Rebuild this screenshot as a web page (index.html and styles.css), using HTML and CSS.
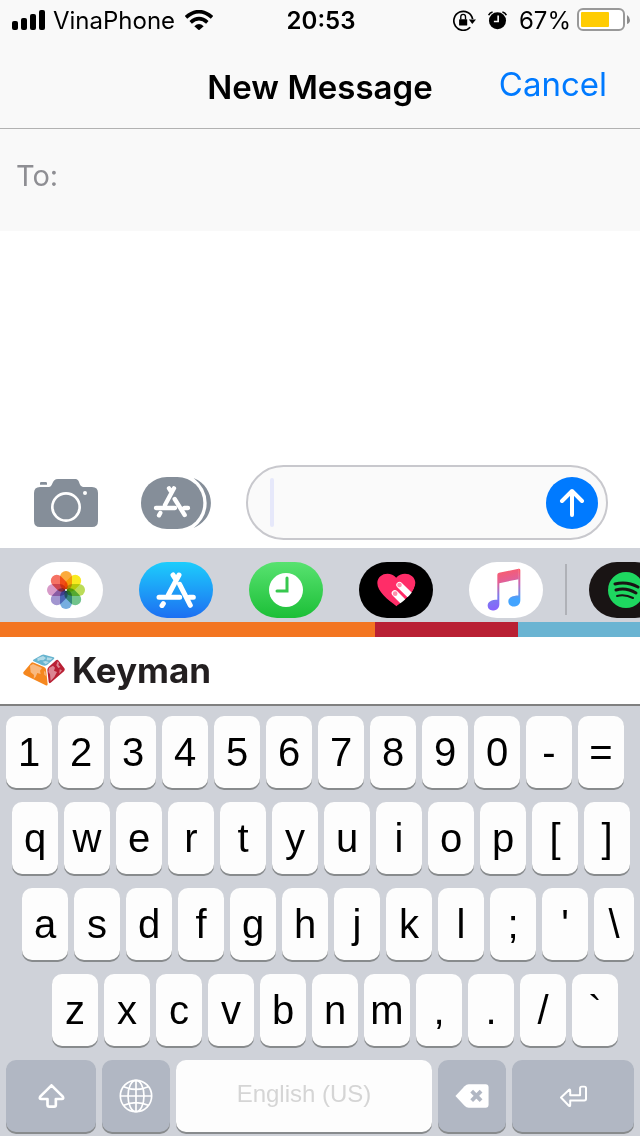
FILE: index.html
```html
<!DOCTYPE html>
<html lang="en">
<head>
<meta charset="utf-8">
<meta name="viewport" content="width=device-width, initial-scale=1">
<title>New Message</title>
<link rel="stylesheet" href="styles.css">
</head>
<body>
<header class="top">
  <div class="status">
    <div class="status-left">
      <svg class="signal" viewBox="0 0 34 20" width="34" height="20" aria-hidden="true"><rect x="0" y="11" width="6" height="9" rx="2"/><rect x="9" y="8" width="6" height="12" rx="2"/><rect x="18" y="4" width="6" height="16" rx="2"/><rect x="27" y="0" width="6" height="20" rx="2"/></svg>
      <span>VinaPhone</span>
      <svg class="wifi" viewBox="0 0 84 60" width="28" height="20" aria-hidden="true"><g fill="none" stroke="#000" stroke-width="11"><path d="M3 22Q42-12 81 22"/><path d="M17 37Q42 15 67 37"/></g><path d="M28 49Q42 35 56 49L42 61Z"/></svg>
    </div>
    <time class="clock">20:53</time>
    <div class="status-right">
      <svg class="lock" viewBox="0 0 68 62" width="23" height="21" aria-hidden="true"><path d="M51 51A28 28 0 1 1 58 27" fill="none" stroke="#000" stroke-width="5"/><path d="M47 28H68L57 41Z"/><rect x="18" y="27" width="24" height="19" rx="2"/><path d="M23 28V20a7 7 0 0 1 14 0V28" fill="none" stroke="#000" stroke-width="4"/></svg>
      <svg class="alarm" viewBox="0 0 58 56" width="19" height="19" aria-hidden="true"><circle cx="29" cy="29" r="26"/><path d="M2 12Q5 4 14 2M44 2Q53 4 56 12" fill="none" stroke="#000" stroke-width="5"/><path d="M31 13V31H18" fill="none" stroke="#f9f9f9" stroke-width="5"/></svg>
      <span>67%</span>
      <svg class="battery" viewBox="0 0 53 24" width="53" height="24" aria-hidden="true"><rect x="1" y="1" width="46" height="21" rx="5" fill="#fff" stroke="#999" stroke-width="2"/><rect x="4" y="4" width="28" height="15" rx="1" fill="#ffcc02"/><path d="M50 7Q53 9 53 12T50 16Z" fill="#8c8c8c"/></svg>
    </div>
  </div>
  <nav class="nav">
    <h1 class="title">New Message</h1>
    <button class="cancel" type="button">Cancel</button>
  </nav>
</header>
<div class="recipient">
  <label for="to">To:</label>
  <input id="to" class="to-input" type="text">
</div>
<main class="thread"></main>
<form class="compose">
  <button class="plain camera" type="button" aria-label="Camera">
    <svg viewBox="0 0 192 144" width="64" height="48"><path fill="#858e99" d="M18 24H44C58 24 52 0 72 0H122C142 0 130 24 152 24H174Q192 24 192 42V126Q192 144 174 144H18Q0 144 0 126V42Q0 24 18 24ZM18 17V12Q18 9 22 9H35Q39 9 39 12V17Z"/><circle cx="96" cy="84" r="41" fill="none" stroke="#fff" stroke-width="8"/><circle cx="153" cy="42" r="6" fill="#fff"/></svg>
  </button>
  <button class="plain store" type="button" aria-label="Apps">
    <svg viewBox="0 0 210 156" width="70" height="52"><rect width="187" height="156" rx="78" ry="78" fill="#858e99"/><path fill="#858e99" d="M158 3C227 32 227 124 158 153Q197 122 197 78T158 3Z"/><g fill="none" stroke="#fff" stroke-width="13" stroke-linecap="round"><path d="M99 34L72 84M84 34L91 45M101 66L131 114M45 93H102M130 93H141M58 108L54 115"/></g></svg>
  </button>
  <div class="message">
    <span class="caret"></span>
    <input class="message-input" type="text" aria-label="Message">
    <button class="plain send" type="submit" aria-label="Send">
      <svg viewBox="0 0 52 52" width="52" height="52"><circle cx="26" cy="26" r="26" fill="#007aff"/><path d="M26 38V14M16 24L26 14L36 24" fill="none" stroke="#fff" stroke-width="4" stroke-linecap="round" stroke-linejoin="round"/></svg>
    </button>
  </div>
</form>
<section class="apps" aria-label="Message apps">
  <button class="app white" type="button" aria-label="Photos">
    <svg viewBox="-20 -20 40 40" width="40" height="40"><g class="petals"><rect x="-6" y="-19" width="12" height="19" rx="6" fill="#fbaa3c"/><rect x="-6" y="-19" width="12" height="19" rx="6" fill="#f8ea20" transform="rotate(45)"/><rect x="-6" y="-19" width="12" height="19" rx="6" fill="#bbdc58" transform="rotate(90)"/><rect x="-6" y="-19" width="12" height="19" rx="6" fill="#72c48c" transform="rotate(135)"/><rect x="-6" y="-19" width="12" height="19" rx="6" fill="#76aee0" transform="rotate(180)"/><rect x="-6" y="-19" width="12" height="19" rx="6" fill="#a296d0" transform="rotate(225)"/><rect x="-6" y="-19" width="12" height="19" rx="6" fill="#d79ac8" transform="rotate(270)"/><rect x="-6" y="-19" width="12" height="19" rx="6" fill="#f57264" transform="rotate(315)"/></g><circle r="1" fill="#fff"/></svg>
  </button>
  <button class="app blue" type="button" aria-label="App Store">
    <svg viewBox="468 76 120 108" width="40" height="36"><g fill="none" stroke="#fff" stroke-width="15" stroke-linecap="round"><path d="M537 85L505 145M519 85L527 97M539 113L571 176M477 152H539M568 152H580M490 171L486 177"/></g></svg>
  </button>
  <button class="app green" type="button" aria-label="Recents">
    <svg viewBox="0 0 34 34" width="34" height="34"><circle cx="17" cy="17" r="17" fill="#fff"/><path d="M18 5V18H8" fill="none" stroke="#37c84e" stroke-width="3" stroke-linecap="round"/></svg>
  </button>
  <button class="app black" type="button" aria-label="Digital Touch">
    <svg viewBox="470 88 118 102" width="39" height="34"><path d="M529 188C502 168 471 144 471 118C471 88 511 80 528 102C545 80 586 88 586 118C586 145 555 170 529 188Z" fill="#ff2d68"/><path d="M538 124L572 157M524 149L551 176" stroke="#fff" stroke-width="19" stroke-linecap="round"/><path d="M586 118C586 145 555 170 529 188L540 198L596 170Z" fill="#000"/><circle cx="538" cy="124" r="7" fill="#ff8fac"/><circle cx="525" cy="150" r="7" fill="#ff8fac"/></svg>
  </button>
  <button class="app white" type="button" aria-label="Music">
    <svg viewBox="170 68 114 128" width="38" height="43"><defs><linearGradient id="note" x1="0.300" y1="0" x2="0.500" y2="1"><stop offset="0" stop-color="#ff5b62"/><stop offset=".32" stop-color="#e45f94"/><stop offset=".65" stop-color="#7a7cef"/><stop offset="1" stop-color="#8c5cff"/></linearGradient><linearGradient id="tail" x1="0" y1="0" x2="0" y2="1"><stop offset="0" stop-color="#ff5a63"/><stop offset=".4" stop-color="#c66ab9"/><stop offset=".8" stop-color="#43a4ff"/></linearGradient></defs><path fill="url(#note)" d="M201 88Q201 83 206 82L265 70V101L207 113V176C207 190 196 195 187 195C177 195 172 189 172 181C172 168 184 163 201 163Z"/><path fill="url(#tail)" d="M264 70Q270 69 270 74V164C270 178 259 183 250 183C240 183 234 176 234 168C234 156 247 150 264 150Z"/></svg>
  </button>
  <span class="divider"></span>
  <button class="app dark" type="button" aria-label="Spotify">
    <svg viewBox="0 0 36 36" width="36" height="36"><circle cx="18" cy="18" r="18" fill="#1ed760"/><g fill="none" stroke="#191414" stroke-linecap="round"><path d="M7 12Q19 9 30 15" stroke-width="3"/><path d="M8 18Q18 15 28 21" stroke-width="3"/><path d="M9 24Q17 22 25 26" stroke-width="2"/></g></svg>
  </button>
</section>
<section class="keyboard" aria-label="Keyboard">
  <div class="stripe"><i class="orange"></i><i class="red"></i><i class="sky"></i></div>
  <div class="brand">
    <svg viewBox="68 328 126 96" width="42" height="32" aria-hidden="true"><path fill="#f5871f" d="M93 354Q96 352 101 354L131 367Q136 369 137 374L142 418Q142 424 136 422L75 392Q67 389 69 383Z"/><path fill="#67b4cf" d="M99 345L124 331Q128 329 132 330L160 338Q165 340 160 344L140 361Q134 365 126 362L100 350Q96 348 99 345Z"/><path fill="#b92034" d="M167 347Q171 343 175 348L192 371Q195 375 191 380L151 414Q146 418 145 411L141 376Q141 371 145 367Z"/><path fill="#f9b980" d="M89 363L98 358L125 370L119 378L121 388L111 385L106 396L100 403L101 391L91 383ZM131 379L135 382L137 394L132 390Z"/><path fill="#b2dae7" d="M111 341L128 334L137 340L129 347L121 346L112 350ZM140 338L157 341L151 347L139 347ZM127 351L136 349L146 352L136 359Z"/><path fill="#dc8592" d="M146 370L158 363L164 369L161 378L170 382L162 397L151 409L149 389L144 382ZM172 350L176 354L174 361L180 367L174 370L168 362ZM178 374L185 377L177 387Z"/></svg>
    <span class="brand-name">Keyman</span>
  </div>
  <div class="keys">
    <div class="row row-digits"><button class="key">1</button><button class="key">2</button><button class="key">3</button><button class="key">4</button><button class="key">5</button><button class="key">6</button><button class="key">7</button><button class="key">8</button><button class="key">9</button><button class="key">0</button><button class="key">-</button><button class="key">=</button></div>
    <div class="row row-upper"><button class="key">q</button><button class="key">w</button><button class="key">e</button><button class="key">r</button><button class="key">t</button><button class="key">y</button><button class="key">u</button><button class="key">i</button><button class="key">o</button><button class="key">p</button><button class="key">[</button><button class="key">]</button></div>
    <div class="row row-home"><button class="key">a</button><button class="key">s</button><button class="key">d</button><button class="key">f</button><button class="key">g</button><button class="key">h</button><button class="key">j</button><button class="key">k</button><button class="key">l</button><button class="key">;</button><button class="key">'</button><button class="key narrow">\</button></div>
    <div class="row row-lower"><button class="key">z</button><button class="key">x</button><button class="key">c</button><button class="key">v</button><button class="key">b</button><button class="key">n</button><button class="key">m</button><button class="key">,</button><button class="key">.</button><button class="key">/</button><button class="key">`</button></div>
    <div class="row row-space">
      <button class="key special shift" aria-label="Shift"><svg viewBox="113 130 80 72" width="27" height="24"><path d="M153 134L187 168Q190 175 184 175H166V193Q166 198 161 198H146Q141 198 141 193V175H122Q116 175 119 168Z" fill="none" stroke="#fff" stroke-width="8" stroke-linejoin="round"/></svg></button>
      <button class="key special globe" aria-label="Next keyboard"><svg viewBox="-51 -51 102 102" width="34" height="34"><g fill="none" stroke="#fff" stroke-width="5"><circle r="47"/><path d="M0-47V47M-47 0H47M-37-28Q0-12 37-28M-37 28Q0 12 37 28"/><ellipse rx="24" ry="47"/></g></svg></button>
      <button class="key space">English (US)</button>
      <button class="key special delete" aria-label="Delete"><svg viewBox="404 129 104 74" width="34" height="24"><path fill="#fff" d="M405 166L433 136Q439 130 446 130H498Q507 130 507 139V192Q507 202 498 202H446Q439 202 433 196Z"/><path d="M455 151L484 180M484 151L455 180" stroke="#b1b7c3" stroke-width="12"/></svg></button>
      <button class="key special enter" aria-label="Return"><svg viewBox="718 136 82 68" width="27" height="23"><path d="M721 173L745 150Q749 147 749 152V166H779V145Q779 140 784 140H792Q797 140 797 145V177Q797 182 792 182H749V196Q749 201 745 198Z" fill="none" stroke="#fff" stroke-width="6" stroke-linejoin="round"/></svg></button>
    </div>
  </div>
</section>
</body>
</html>
```
FILE: styles.css
```css
* { box-sizing: border-box; }
body {
  margin: 0;
  min-height: 100vh;
  display: flex;
  flex-direction: column;
  overflow-x: hidden;
  background: #fff;
  color: #000;
  font-family: Inter, "Liberation Sans", sans-serif;
}
button { margin: 0; padding: 0; border: 0; font: inherit; color: inherit; background: none; cursor: pointer; }
input { border: 0; outline: 0; padding: 0; background: none; font: inherit; min-width: 0; }
svg { display: block; flex: none; }

.top { background: #f9f9f9; border-bottom: 1px solid #b2b2b2; }
.status {
  display: grid;
  grid-template-columns: 1fr auto 1fr;
  align-items: center;
  height: 40px;
  padding: 0 10px 0 12px;
  font-size: 24px;
}
.status-left, .status-right { display: flex; align-items: center; }
.status-left { gap: 7px; }
.wifi { margin-left: 3px; }
.status-right { justify-content: flex-end; gap: 12px; }
.battery { margin-left: -6px; }
.clock { font-weight: 600; }
.nav {
  display: grid;
  grid-template-columns: 1fr auto 1fr;
  align-items: center;
  height: 88px;
  padding: 0 33px;
}
.title { grid-column: 2; margin: 0; font-size: 33px; font-weight: 600; line-height: 40px; padding-top: 6px; }
.cancel { justify-self: end; font-size: 33px; line-height: 40px; color: #007aff; }

.recipient {
  display: flex;
  align-items: center;
  gap: 12px;
  height: 102px;
  padding: 0 16px 10px;
  background: #f9f9f9;
  color: #8e8e93;
  font-size: 29px;
}
.to-input { flex: 1; }
.thread { flex: 1; }

.compose { display: flex; align-items: center; padding: 0 32px 8px 34px; }
.store { margin: 0 35px 0 43px; }
.message {
  flex: 1;
  min-width: 0;
  display: flex;
  align-items: center;
  gap: 8px;
  height: 75px;
  padding: 0 8px 0 22px;
  border: 2px solid #c8c8cd;
  border-radius: 38px;
  background: #fafafa;
}
.caret { flex: none; width: 4px; height: 49px; border-radius: 2px; background: #e6e8fa; }
.message-input { flex: 1; font-size: 33px; }

.apps {
  display: flex;
  align-items: center;
  gap: 36px;
  height: 74px;
  padding: 9px 0 0 29px;
  overflow: hidden;
  background: #d0d3da;
}
.app {
  flex: none;
  display: flex;
  align-items: center;
  justify-content: center;
  width: 74px;
  height: 56px;
  border-radius: 28px;
}
.white { background: #fff; }
.blue { background: linear-gradient(#1dcdfc, #1d6ff2); }
.green { background: linear-gradient(#58e270, #1cbf37); }
.black { background: #000; }
.dark { background: #191414; }
.petals rect { mix-blend-mode: multiply; }
.petals { isolation: isolate; }
.divider { flex: none; width: 2px; height: 51px; margin: 0 -14px; background: #afb1b7; }

.stripe { display: flex; height: 15px; }
.orange { flex: 375; background: #f37521; }
.red { flex: 143; background: #b92034; }
.sky { flex: 122; background: #6ab4d2; }
.brand {
  display: flex;
  align-items: center;
  gap: 7px;
  height: 69px;
  padding: 0 23px 2px;
  border-bottom: 2px solid #808080;
  background: #fff;
}
.brand-name { font-size: 35px; line-height: 40px; font-weight: 700; color: #231f20; }
.keys {
  display: flex;
  flex-direction: column;
  gap: 14px;
  padding: 10px 6px 4px;
  background: #cfd2d9;
  font-family: "Liberation Sans", Arial, sans-serif;
}
.row { display: flex; gap: 6px; }
.row-digits { padding-right: 10px; }
.row-upper { padding: 0 4px 0 6px; }
.row-home { padding-left: 16px; }
.row-lower { padding: 0 16px 0 46px; }
.key {
  flex: 46 1 0;
  min-width: 0;
  height: 72px;
  display: flex;
  align-items: center;
  justify-content: center;
  border-radius: 10px;
  background: #fdfdfd;
  box-shadow: 0 2px 0 #888b8d;
  font-size: 40px;
}
.narrow { flex-grow: 40; }
.special { background: #b1b7c3; }
.shift { flex-grow: 90; }
.globe, .delete { flex-grow: 68; }
.space { flex-grow: 256; padding-bottom: 4px; font-size: 24px; color: #d5d5d5; }
.enter { flex-grow: 122; }
```
